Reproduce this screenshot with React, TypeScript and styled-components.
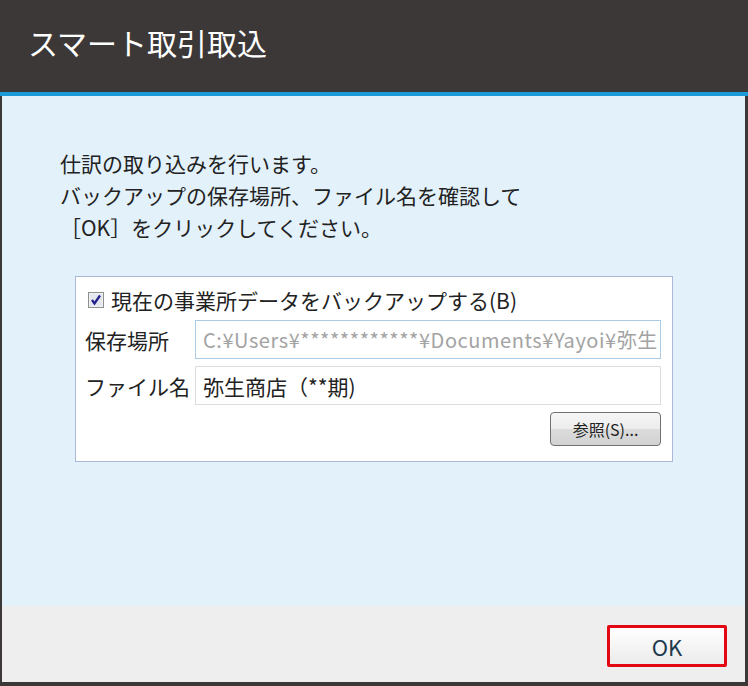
import React from 'react';
import styled, { createGlobalStyle } from 'styled-components';

const GlobalStyle = createGlobalStyle`
  html, body {
    margin: 0;
    padding: 0;
    background: #3c3837;
  }
  * {
    box-sizing: border-box;
  }
`;

const FONT = `"Noto Sans CJK JP", "Noto Sans", sans-serif`;

const Frame = styled.div`
  width: 748px;
  height: 686px;
  background: #3c3837;
  padding: 0 3px 4px 2px;
  display: flex;
  flex-direction: column;
  font-family: ${FONT};
`;

const TitleBar = styled.div`
  height: 96px;
  flex: none;
  margin: 0 -3px 0 -2px;
  padding: 0 0 8px 28px;
  display: flex;
  align-items: center;
  border-bottom: 4px solid #1b9bd7;
  color: #ffffff;
  font-size: 30px;
`;

const Body = styled.div`
  flex: 1;
  background: #e3f1fa;
  padding: 51px 0 0 58px;
`;

const Message = styled.p`
  margin: 0;
  font-size: 21px;
  line-height: 32px;
  color: #222222;
`;

const GroupBox = styled.div`
  margin: 33px 0 0 15px;
  width: 598px;
  background: #ffffff;
  border: 1px solid #a9b7d9;
  padding: 9px 11px 15px 9px;
  display: grid;
  grid-template-columns: 110px 1fr;
  row-gap: 7px;
  align-items: center;
`;

const CheckRow = styled.label`
  grid-column: 1 / span 2;
  display: flex;
  align-items: center;
  gap: 7px;
  height: 27px;
  padding-left: 3px;
  font-size: 21px;
  color: #222222;
`;

const FieldLabel = styled.span`
  font-size: 21px;
  color: #222222;
  white-space: nowrap;
`;

const Field = styled.div<{ $disabled?: boolean }>`
  height: 39px;
  border: 1px solid ${(p) => (p.$disabled ? '#a9cbe6' : '#dddddd')};
  background: #ffffff;
  padding: 0 0 0 7px;
  display: flex;
  align-items: center;
  overflow: hidden;
  white-space: nowrap;
  font-size: ${(p) => (p.$disabled ? '20px' : '21px')};
  letter-spacing: ${(p) => (p.$disabled ? '0.55px' : '0')};
  color: ${(p) => (p.$disabled ? '#a3a3a3' : '#222222')};
`;

const ButtonRow = styled.div`
  grid-column: 1 / span 2;
  display: flex;
  justify-content: flex-end;
`;

const BrowseButton = styled.button`
  width: 111px;
  height: 34px;
  border: 1px solid #707070;
  border-radius: 4px;
  background: linear-gradient(#f6f6f6 0%, #ececec 50%, #dcdcdc 51%, #d2d2d2 100%);
  font-family: ${FONT};
  font-size: 16px;
  color: #222222;
  padding: 0;
`;

const Footer = styled.div`
  height: 76px;
  flex: none;
  background: #eeeeee;
  display: flex;
  justify-content: flex-end;
  align-items: flex-start;
  padding: 19px 18px 0 0;
`;

const OkButton = styled.button`
  width: 120px;
  height: 42px;
  border: 3px solid #e30613;
  border-radius: 2px;
  background: linear-gradient(#ffffff, #ebebeb);
  font-family: ${FONT};
  font-size: 22px;
  color: #1f3a4e;
  padding: 0;
`;

const CheckIcon: React.FC = () => (
  <svg width="16" height="16" viewBox="0 0 16 16">
    <rect x="0.5" y="0.5" width="15" height="15" fill="#f1f1f1" stroke="#8e8f8f" />
    <rect x="2" y="2" width="12" height="12" fill="#e4e8ee" />
    <path d="M4 8 L6.5 11.5 L12 3.5" fill="none" stroke="#23238a" strokeWidth="2.3" />
  </svg>
);

const App: React.FC = () => {
  return (
    <>
      <GlobalStyle />
      <Frame>
        <TitleBar>スマート取引取込</TitleBar>
        <Body>
          <Message>
            仕訳の取り込みを行います。
            <br />
            バックアップの保存場所、ファイル名を確認して
            <br />
            ［OK］をクリックしてください。
          </Message>
          <GroupBox>
            <CheckRow>
              <CheckIcon />
              現在の事業所データをバックアップする(B)
            </CheckRow>
            <FieldLabel>保存場所</FieldLabel>
            <Field $disabled>C:¥Users¥************¥Documents¥Yayoi¥弥生</Field>
            <FieldLabel>ファイル名</FieldLabel>
            <Field>弥生商店（**期)</Field>
            <ButtonRow>
              <BrowseButton>参照(S)...</BrowseButton>
            </ButtonRow>
          </GroupBox>
        </Body>
        <Footer>
          <OkButton>OK</OkButton>
        </Footer>
      </Frame>
    </>
  );
};

export default App;
